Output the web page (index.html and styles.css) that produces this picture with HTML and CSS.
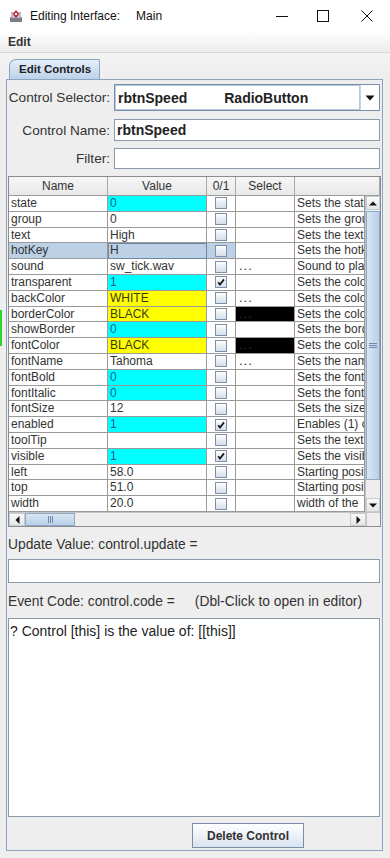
FILE: index.html
```html
<!DOCTYPE html>
<html lang="en">
<head>
  <meta charset="UTF-8">
  <meta name="viewport" content="width=device-width, initial-scale=1.0">
  <title>Editing Interface: Main</title>
  <link rel="stylesheet" href="styles.css">
</head>
<body>
  <div class="titlebar">
    <svg class="app-icon" width="14" height="14" viewBox="0 0 14 14">
      <rect x="1" y="8" width="12" height="5" fill="#7d7d88"/>
      <rect x="2" y="3" width="10" height="6" fill="#b9bcc8"/>
      <path d="M7 1 L10 5 L7 9 L4 5 Z" fill="#c8202a"/>
      <rect x="6" y="4" width="2" height="2" fill="#fff"/>
    </svg>
    <span class="title">Editing Interface:</span>
    <span class="title title-name">Main</span>
    <div class="win-buttons">
      <svg width="14" height="14" viewBox="0 0 14 14"><path d="M1 7.5 H13" stroke="#111" stroke-width="1"/></svg>
      <svg width="14" height="14" viewBox="0 0 14 14"><rect x="1.5" y="1.5" width="11" height="11" fill="none" stroke="#111" stroke-width="1"/></svg>
      <svg width="14" height="14" viewBox="0 0 14 14"><path d="M1.5 1.5 L12.5 12.5 M12.5 1.5 L1.5 12.5" stroke="#111" stroke-width="1"/></svg>
    </div>
  </div>

  <div class="menubar"><span class="menu-item">Edit</span></div>

  <div class="content">
    <div class="tabs"><div class="tab">Edit Controls</div></div>
    <div class="panel">
      <!-- selector / name / filter -->
      <div class="form-row row-selector">
        <label class="form-label">Control Selector:</label>
        <div class="combo">
          <div class="combo-text"><span class="combo-name">rbtnSpeed</span><span class="combo-type">RadioButton</span></div>
          <div class="combo-arrow">
            <svg width="10" height="6" viewBox="0 0 10 6"><path d="M0.5 0.5 H9.5 L5 5.5 Z" fill="#111"/></svg>
          </div>
        </div>
      </div>
      <div class="form-row row-name">
        <label class="form-label">Control Name:</label>
        <div class="field field-bold">rbtnSpeed</div>
      </div>
      <div class="form-row row-filter">
        <label class="form-label">Filter:</label>
        <div class="field"></div>
      </div>

      <!-- property table -->
      <div class="prop-table">
        <div class="prop-head">
          <div>Name</div><div>Value</div><div>0/1</div><div>Select</div><div></div>
        </div>
        <div class="prop-body">
          <div class="prop-grid">
            <div>state</div><div class="cyan">0</div><div class="c"><span class="chk"></span></div><div></div><div>Sets the state of</div>
            <div>group</div><div>0</div><div class="c"><span class="chk"></span></div><div></div><div>Sets the group of</div>
            <div>text</div><div>High</div><div class="c"><span class="chk"></span></div><div></div><div>Sets the text of</div>
            <div class="sel">hotKey</div><div class="sel focus">H</div><div class="c sel"><span class="chk"></span></div><div></div><div>Sets the hotkey of</div>
            <div>sound</div><div>sw_tick.wav</div><div class="c"><span class="chk"></span></div><div class="dots">...</div><div>Sound to play</div>
            <div>transparent</div><div class="cyan">1</div><div class="c"><span class="chk"><svg viewBox="0 0 10 10"><path d="M2.2 5.2 L4 7.6 L8 2.4"/></svg></span></div><div></div><div>Sets the color</div>
            <div>backColor</div><div class="yellow">WHITE</div><div class="c"><span class="chk"></span></div><div class="dots">...</div><div>Sets the color</div>
            <div>borderColor</div><div class="yellow">BLACK</div><div class="c"><span class="chk"></span></div><div class="dots swatch">...</div><div>Sets the color</div>
            <div>showBorder</div><div class="cyan">0</div><div class="c"><span class="chk"></span></div><div></div><div>Sets the border</div>
            <div>fontColor</div><div class="yellow">BLACK</div><div class="c"><span class="chk"></span></div><div class="dots swatch">...</div><div>Sets the color</div>
            <div>fontName</div><div>Tahoma</div><div class="c"><span class="chk"></span></div><div class="dots">...</div><div>Sets the name</div>
            <div>fontBold</div><div class="cyan">0</div><div class="c"><span class="chk"></span></div><div></div><div>Sets the font</div>
            <div>fontItalic</div><div class="cyan">0</div><div class="c"><span class="chk"></span></div><div></div><div>Sets the font</div>
            <div>fontSize</div><div>12</div><div class="c"><span class="chk"></span></div><div></div><div>Sets the size</div>
            <div>enabled</div><div class="cyan">1</div><div class="c"><span class="chk"><svg viewBox="0 0 10 10"><path d="M2.2 5.2 L4 7.6 L8 2.4"/></svg></span></div><div></div><div>Enables (1) or</div>
            <div>toolTip</div><div></div><div class="c"><span class="chk"></span></div><div></div><div>Sets the text</div>
            <div>visible</div><div class="cyan">1</div><div class="c"><span class="chk"><svg viewBox="0 0 10 10"><path d="M2.2 5.2 L4 7.6 L8 2.4"/></svg></span></div><div></div><div>Sets the visible</div>
            <div>left</div><div>58.0</div><div class="c"><span class="chk"></span></div><div></div><div>Starting position</div>
            <div>top</div><div>51.0</div><div class="c"><span class="chk"></span></div><div></div><div>Starting position</div>
            <div>width</div><div>20.0</div><div class="c"><span class="chk"></span></div><div></div><div>width of the</div>
          </div>
          <div class="vscroll">
            <div class="sb-btn"><svg width="8" height="5" viewBox="0 0 8 5"><path d="M0 4.5 H8 L4 0.5 Z" fill="#111"/></svg></div>
            <div class="vtrack">
              <div class="vthumb"><span class="grip-h"></span></div>
            </div>
            <div class="sb-btn"><svg width="8" height="5" viewBox="0 0 8 5"><path d="M0 0.5 H8 L4 4.5 Z" fill="#111"/></svg></div>
          </div>
        </div>
        <div class="hscroll">
          <div class="sb-btn"><svg width="5" height="8" viewBox="0 0 5 8"><path d="M4.5 0 V8 L0.5 4 Z" fill="#111"/></svg></div>
          <div class="htrack"><div class="hthumb"><span class="grip-v"></span></div></div>
          <div class="sb-btn"><svg width="5" height="8" viewBox="0 0 5 8"><path d="M0.5 0 V8 L4.5 4 Z" fill="#111"/></svg></div>
          <div class="corner"></div>
        </div>
      </div>

      <!-- update / event code -->
      <div class="text-label label-update">Update Value: control.update =</div>
      <div class="field field-update"></div>
      <div class="text-label label-event">Event Code: control.code =<span class="hint">(Dbl-Click to open in editor)</span></div>
      <div class="code-area">? Control [this] is the value of: [[this]]</div>

      <div class="button-row">
        <button class="btn">Delete Control</button>
      </div>
    </div>
  </div>
  <div class="edge-mark"></div>
</body>
</html>
```

FILE: styles.css
```css
* {
  box-sizing: border-box;
}
html, body {
  margin: 0;
  padding: 0;
}
body {
  width: 390px;
  height: 858px;
  overflow: hidden;
  background: #eeeeee;
  font-family: "Liberation Sans", Arial, sans-serif;
  color: #333;
  position: relative;
}

/* window title bar */
.titlebar {
  height: 31px;
  background: #fff;
  display: flex;
  align-items: center;
  padding-left: 9px;
}
.title {
  font-family: "Liberation Sans", Arial, sans-serif;
  font-size: 12px;
  color: #111;
  margin-left: 7px;
}
.title-name {
  margin-left: 16px;
}
.win-buttons {
  margin-left: auto;
  display: flex;
  gap: 30px;
  padding-right: 16px;
  padding-top: 1px;
}
.win-buttons svg:first-child {
  margin-right: -3px;
}

/* menu */
.menubar {
  height: 22px;
  background: linear-gradient(#ffffff, #ececec);
  border-bottom: 1px solid #d6d6d6;
  display: flex;
  align-items: center;
  padding-left: 8px;
}
.menu-item {
  font-size: 12px;
  font-weight: bold;
  color: #333;
}

/* tab + panel */
.content {
  padding: 6px 7px 0 6px;
  background: linear-gradient(#f4f4f4, #eeeeee 20px);
}
.tabs {
  display: flex;
  padding-left: 3px;
  height: 20px;
}
.tab {
  width: 91px;
  height: 20px;
  border: 1px solid #8ea3bd;
  border-bottom: none;
  border-radius: 7px 2px 0 0;
  background: linear-gradient(#e4eef9, #bcd2ea);
  font-size: 11.5px;
  font-weight: bold;
  padding: 3px 0 0 9px;
  color: #222;
}
.panel {
  width: 377px;
  height: 772px;
  border: 1px solid #8ea3bd;
  padding: 4px 1px 0 1px;
}

/* form rows */
.form-row {
  display: flex;
  align-items: center;
  width: 372px;
}
.form-label {
  flex: none;
  width: 104px;
  display: flex;
  justify-content: flex-end;
  white-space: nowrap;
  font-size: 13.6px;
  padding-right: 2px;
  color: #333;
}
.row-selector {
  height: 27px;
}
.row-name {
  height: 22px;
  margin-top: 8px;
}
.row-filter {
  height: 21px;
  margin-top: 7px;
}
.combo {
  margin-left: 2px;
  flex: 1;
  height: 27px;
  border: 1px solid #7a8ea8;
  background: #fff;
  display: flex;
}
.combo-text {
  flex: 1;
  border: 1px solid #b4c8e2;
  display: flex;
  align-items: center;
  padding-left: 2px;
  font-size: 14px;
  font-weight: bold;
  color: #222;
}
.combo-type {
  margin-left: 37px;
}
.combo-arrow {
  width: 19px;
  border-left: 1px solid #c9d3df;
  display: flex;
  align-items: center;
  justify-content: center;
}
.field {
  margin-left: 2px;
  flex: 1;
  height: 100%;
  background: #fff;
  border: 1px solid #8c99a8;
  font-size: 14px;
  color: #222;
  padding-left: 2px;
  display: flex;
  align-items: center;
}
.field-bold {
  font-weight: bold;
}

/* property table */
.prop-table {
  margin-top: 7px;
  width: 373px;
  border: 1px solid #8c8c8c;
  background: #fff;
  font-size: 12px;
}
.prop-head {
  display: grid;
  grid-template-columns: 99px 99px 29px 59px 85px;
  height: 19px;
  background: linear-gradient(#f6f6f6, #e8e8e8);
  border-bottom: 1px solid #9a9a9a;
}
.prop-head div {
  border-right: 1px solid #a8a8a8;
  text-align: center;
  line-height: 19px;
  color: #333;
}
.prop-body {
  display: flex;
  height: 316px;
}
.prop-grid {
  display: grid;
  grid-template-columns: 99px 99px 29px 59px 70px;
  grid-auto-rows: 15.8px;
  width: 356px;
}
.prop-grid div {
  border-right: 1px solid #9a9a9a;
  border-bottom: 1px solid #9a9a9a;
  padding-left: 2px;
  line-height: 15px;
  white-space: nowrap;
  overflow: hidden;
  color: #333;
}
.prop-grid .cyan {
  background: #0ff;
  color: #1d5a86;
}
.prop-grid .yellow {
  background: #ff0;
  color: #3a3a10;
}
.prop-grid .sel {
  background: #bcd0e6;
}
.prop-grid .focus {
  outline: 1px solid #6d86a6;
  outline-offset: -1px;
}
.prop-grid .c {
  padding-left: 0;
  display: flex;
  align-items: center;
  justify-content: center;
}
.prop-grid .dots {
  padding-left: 3px;
  line-height: 13px;
  letter-spacing: 1px;
  font-size: 13px;
}
.prop-grid .swatch {
  background: #000;
  color: #333;
}
.chk {
  width: 12px;
  height: 12px;
  border: 1px solid #7f8fa6;
  background: linear-gradient(#fdfdfd, #d4deea);
  display: flex;
}
.chk svg {
  width: 10px;
  height: 10px;
}
.chk path {
  fill: none;
  stroke: #1a1a1a;
  stroke-width: 1.8;
}

/* scrollbars */
.vscroll {
  width: 15px;
  display: flex;
  flex-direction: column;
  background: #eeeeee;
  border-left: 1px solid #c4c4c4;
}
.sb-btn {
  width: 14px;
  height: 14px;
  display: flex;
  align-items: center;
  justify-content: center;
  background: linear-gradient(#fafafa, #e6e6e6);
  border: 1px solid #c6ccd4;
}
.vtrack {
  flex: 1;
  padding-top: 1px;
  padding-bottom: 18px;
  display: flex;
}
.vthumb {
  flex: 1;
  background: linear-gradient(to right, #d9e6f4, #b9cfe8);
  border: 1px solid #8ea9ca;
  display: flex;
  align-items: center;
  justify-content: center;
}
.grip-h {
  width: 8px;
  height: 5px;
  border-top: 1px solid #6d8ab0;
  border-bottom: 1px solid #6d8ab0;
  position: relative;
}
.grip-h::after {
  content: "";
  position: absolute;
  left: 0;
  right: 0;
  top: 1px;
  border-top: 1px solid #6d8ab0;
}
.hscroll {
  display: flex;
  height: 14px;
  border-top: 1px solid #c4c4c4;
  background: #eeeeee;
}
.hscroll .sb-btn {
  width: 16px;
  height: 13px;
}
.htrack {
  width: 325px;
  display: flex;
}
.hthumb {
  width: 50px;
  background: linear-gradient(#d9e6f4, #b9cfe8);
  border: 1px solid #8ea9ca;
  display: flex;
  align-items: center;
  justify-content: center;
}
.grip-v {
  width: 5px;
  height: 7px;
  border-left: 1px solid #6d8ab0;
  border-right: 1px solid #6d8ab0;
  position: relative;
}
.grip-v::after {
  content: "";
  position: absolute;
  top: 0;
  bottom: 0;
  left: 1px;
  border-left: 1px solid #6d8ab0;
}
.corner {
  flex: 1;
  background: #eeeeee;
  border-left: 1px solid #c4c4c4;
}

/* lower section */
.text-label {
  font-size: 13.8px;
  color: #333;
  height: 18px;
  line-height: 18px;
}
.label-update {
  margin-top: 9px;
}
.field-update {
  margin: 5px 0 0 0;
  width: 372px;
  height: 24px;
  flex: none;
}
.label-event {
  margin-top: 10px;
}
.hint {
  margin-left: 20px;
}
.code-area {
  margin-top: 7px;
  width: 372px;
  height: 199px;
  background: #fff;
  border: 1px solid #8c99a8;
  font-size: 14px;
  padding: 4px 0 0 1px;
  color: #222;
}
.button-row {
  display: flex;
  padding-left: 184px;
  margin-top: 6px;
}
.btn {
  width: 112px;
  height: 25px;
  font-family: "Liberation Sans", Arial, sans-serif;
  font-size: 12px;
  font-weight: bold;
  color: #333;
  border: 1px solid #7a8ea8;
  background: linear-gradient(#ffffff, #d8e3ef);
  padding: 0;
}

.edge-mark {
  position: absolute;
  left: 0;
  top: 310px;
  width: 2px;
  height: 36px;
  background: #2bd42b;
}
```
